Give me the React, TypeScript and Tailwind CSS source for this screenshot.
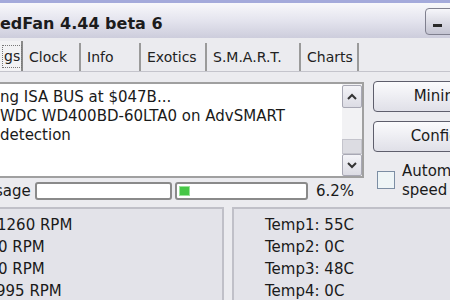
const font = { fontFamily: "Tahoma, 'DejaVu Sans', sans-serif" };

const Tab = ({ label, w }: { label: string; w: string }) => (
  <div className={`${w} h-[28px] flex items-center pl-[6px] border-r-2 border-[#9a9a9a]`}>
    <span className="text-[14px] text-[#222]">{label}</span>
  </div>
);

const Btn = ({ label }: { label: string }) => (
  <div className="w-[148px] h-[31px] shrink-0 rounded-[4px] border border-[#5e5e6c] bg-gradient-to-b from-[#fbfbfd] to-[#e0e0e8] flex items-center justify-center text-[15px] whitespace-nowrap">
    {label}
  </div>
);

export default function App() {
  return (
    <div
      className="w-[450px] h-[300px] overflow-hidden bg-[#ebebef] text-[#1a1a1a] flex flex-col"
      style={font}
    >
      {/* title bar */}
      <div className="h-[38px] shrink-0 border-t-[3px] border-[#a4aadb] bg-gradient-to-b from-[#f8f8fb] via-[#e4e4ee] to-[#cdcddc] flex items-start justify-between">
        <span className="text-[16px] font-bold leading-[20px] mt-[11px] text-[#1c1c1c] whitespace-nowrap">
          edFan 4.44 beta 6
        </span>
        <div className="w-[30px] h-[27px] shrink-0 mr-[-5px] mt-[5px] rounded-[4px] border border-[#80808f] bg-gradient-to-b from-[#f6f6fa] to-[#c4c4d2] flex items-end pb-[7px] pl-[7px]">
          <div className="w-[9px] h-[3px] bg-[#2a2a2a]" />
        </div>
      </div>

      {/* tabs */}
      <div className="h-[34px] shrink-0 flex items-end border-b border-[#c4c4cc]">
        <div className="w-[23px] h-[30px] flex items-center border-r-2 border-[#8a8a8a] bg-[#f2f2f4]">
          <span className="text-[14px] text-[#222] border border-dotted border-[#777] px-[1px] ml-[2px]">gs</span>
        </div>
        <Tab label="Clock" w="w-[58px]" />
        <Tab label="Info" w="w-[60px]" />
        <Tab label="Exotics" w="w-[66px]" />
        <Tab label="S.M.A.R.T." w="w-[94px]" />
        <Tab label="Charts" w="w-[58px]" />
      </div>

      {/* top section */}
      <div className="flex mt-[10px] h-[125px] shrink-0">
        <div className="w-[364px] shrink-0 flex flex-col">
          {/* log box */}
          <div className="h-[96px] flex border-2 border-[#a0a0a0] border-l-0 bg-white">
            <div className="flex-1 flex flex-col text-[15px] leading-[19px] pt-[4px] whitespace-nowrap overflow-hidden">
              <span>ng ISA BUS at $047B...</span>
              <span>WDC WD400BD-60LTA0 on AdvSMART</span>
              <span>detection</span>
            </div>
            <div className="w-[20px] flex flex-col bg-[#f2f2f4] pt-[1px]">
              <div className="h-[23px] border border-[#a8a8b4] rounded-[2px] bg-gradient-to-b from-[#f4f4f8] to-[#dcdce4] flex items-center justify-center">
                <svg width="10" height="7" viewBox="0 0 10 7">
                  <path d="M1 6 L5 2 L9 6" fill="none" stroke="#333" strokeWidth="2" />
                </svg>
              </div>
              <div className="flex-1" />
              <div className="h-[15px] border border-[#c4c4cc] bg-[#dcdce2]" />
              <div className="h-[22px] border border-[#a8a8b4] rounded-[2px] bg-gradient-to-b from-[#f4f4f8] to-[#dcdce4] flex items-center justify-center">
                <svg width="10" height="7" viewBox="0 0 10 7">
                  <path d="M1 1 L5 5 L9 1" fill="none" stroke="#333" strokeWidth="2" />
                </svg>
              </div>
            </div>
          </div>

          {/* usage row */}
          <div className="flex items-center h-[20px] mt-[3px]">
            <div className="w-[35px] overflow-hidden">
              <span className="text-[15px] block ml-[-5px]">sage</span>
            </div>
            <div className="w-[137px] h-[18px] rounded-[3px] border-2 border-[#8a8a8a] bg-white" />
            <div className="w-[133px] h-[18px] ml-[3px] rounded-[3px] border-2 border-[#8a8a8a] bg-white flex items-center px-[2px]">
              <div className="w-[11px] h-[10px] bg-[#46c646] border border-[#9ae49a]" />
            </div>
            <span className="text-[15px] ml-[8px]">6.2%</span>
          </div>
        </div>

        {/* right column */}
        <div className="flex flex-col ml-[9px] gap-[9px] mt-[-1px]">
          <Btn label="Minimize" />
          <Btn label="Configure" />
          <div className="flex items-start ml-[4px] mt-[1px]">
            <div className="w-[18px] h-[18px] mt-[9px] shrink-0 border border-[#7c8ea4] bg-[#eef5f7]" />
            <div className="flex flex-col text-[15px] leading-[19px] ml-[7px] whitespace-nowrap">
              <span>Automatic fan</span>
              <span>speed</span>
            </div>
          </div>
        </div>
      </div>

      {/* readings */}
      <div className="flex-1 flex gap-[8px]">
        <div className="w-[224px] border-t-2 border-r-2 border-[#c0c0c8] bg-[#e3e3e9] flex flex-col pt-[5px] text-[15px] leading-[22px] whitespace-nowrap">
          <span className="ml-[-3px]">1260 RPM</span>
          <span className="ml-[-2px]">0 RPM</span>
          <span className="ml-[-2px]">0 RPM</span>
          <span className="ml-[-4px]">995 RPM</span>
        </div>
        <div className="flex-1 border-t-2 border-l-2 border-[#c0c0c8] bg-[#e3e3e9] flex flex-col pt-[5px] pl-[31px] text-[15px] leading-[22px] whitespace-nowrap">
          <span>Temp1: 55C</span>
          <span>Temp2: 0C</span>
          <span>Temp3: 48C</span>
          <span>Temp4: 0C</span>
        </div>
      </div>
    </div>
  );
}
